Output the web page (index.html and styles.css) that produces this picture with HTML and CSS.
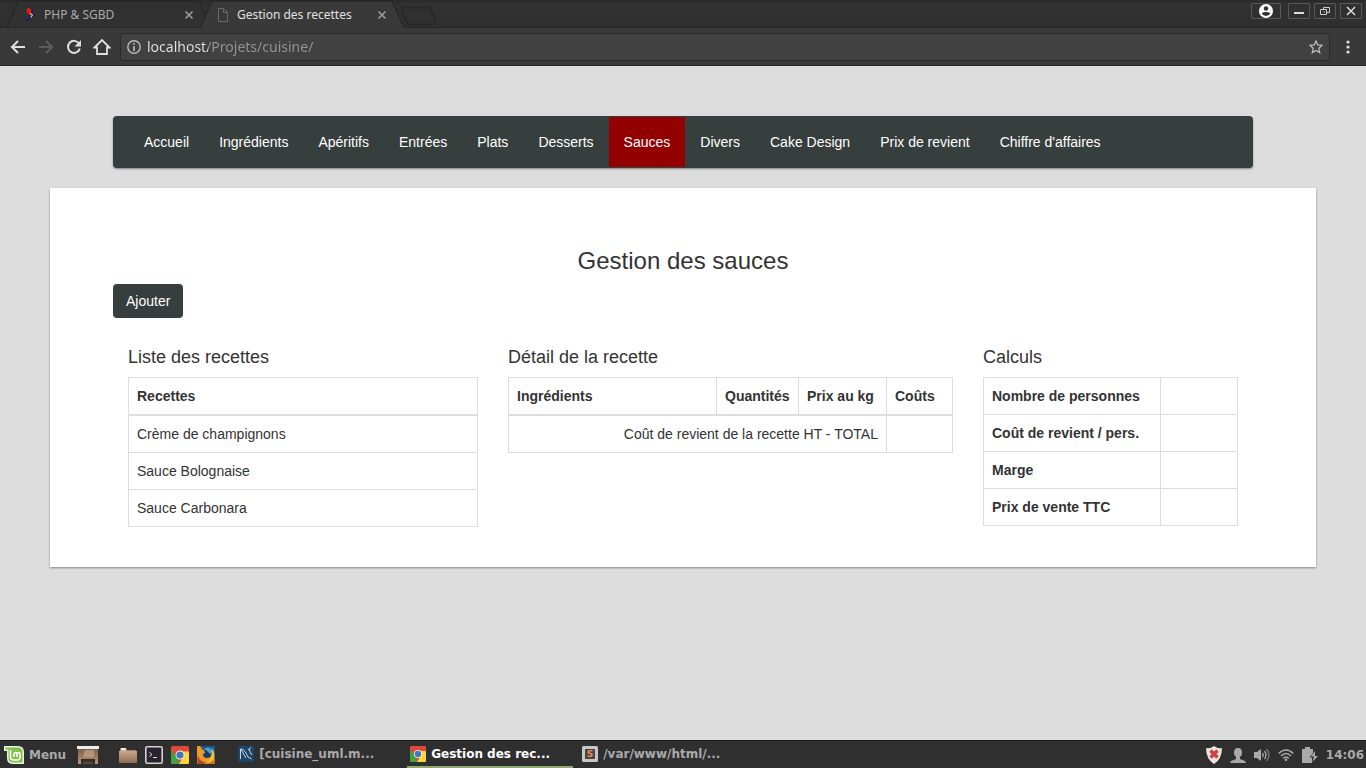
FILE: index.html
```html
<!DOCTYPE html>
<html lang="fr">
<head>
<meta charset="utf-8">
<meta name="viewport" content="width=device-width, initial-scale=1">
<title>Gestion des recettes</title>
<link rel="stylesheet" href="styles.css">
</head>
<body>

<header class="browser">
  <div class="tabstrip">
    <div class="tabs">
      <div class="tab">
        <svg class="tab-shape" viewBox="0 0 204 28" preserveAspectRatio="none"><path d="M0 28 11 1H192L204 28Z" fill="#313131" stroke="#232323"/></svg>
        <div class="tab-content">
          <svg width="12" height="14" viewBox="0 0 12 14"><path d="M5 0C2 .5 2 4 4 5.500L7.500 8 8.500 6 7.500 1.500Z" fill="#f01808"/><path d="M7.500.5 8.500 3 7 5.500M9 6.500 11 8M7 9 5 11 2 13.500" stroke="#16168c" stroke-width="1.500" fill="none"/><path d="M6 5 8.500 7 7 9.500" stroke="#e8e8e8" fill="none"/></svg>
          <span class="tab-title">PHP &amp; SGBD</span>
          <button class="tab-close" type="button" aria-label="Fermer l'onglet"><svg width="10" height="10" viewBox="0 0 10 10"><path d="M1.500 1.500 8.500 8.500M8.500 1.500 1.500 8.500" stroke="currentColor" stroke-width="1.700"/></svg></button>
        </div>
      </div>
      <div class="tab tab-active">
        <svg class="tab-shape" viewBox="0 0 204 28" preserveAspectRatio="none"><path d="M0 28 12 1H192L204 28V29H0Z" fill="#393939"/><path d="M0 28 12 1H192L204 28" fill="none" stroke="#232323"/></svg>
        <div class="tab-content">
          <svg width="12" height="14" viewBox="0 0 12 14"><path d="M1.500.5h5l4 4v9h-9zM6.500.5v4h4" fill="none" stroke="#686868"/></svg>
          <span class="tab-title">Gestion des recettes</span>
          <button class="tab-close" type="button" aria-label="Fermer l'onglet"><svg width="10" height="10" viewBox="0 0 10 10"><path d="M1.500 1.500 8.500 8.500M8.500 1.500 1.500 8.500" stroke="currentColor" stroke-width="1.700"/></svg></button>
        </div>
      </div>
      <button class="new-tab" type="button" aria-label="Nouvel onglet"><svg width="36" height="20" viewBox="0 0 36 20"><path d="M3 1.500H27Q29 1.500 30 3L34 15Q35 18.500 32 18.500H9Q7 18.500 6 17L1 4Q0 1.500 3 1.500Z" fill="#303030" stroke="#272727" stroke-width="1.500"/></svg></button>
    </div>
    <div class="window-buttons">
      <button class="win-btn profile" type="button" aria-label="Profil"><svg width="14" height="14" viewBox="0 0 14 14"><circle cx="7" cy="7" r="7" fill="#fff"/><circle cx="7" cy="4.500" r="2.200" fill="#303030"/><path d="M2.500 9.300Q7 6.600 11.500 9.300 10 12 7 12T2.500 9.300Z" fill="#303030"/></svg></button>
      <button class="win-btn" type="button" aria-label="Réduire"><svg width="12" height="12" viewBox="0 0 12 12"><path d="M1 8H11" stroke="#ddd" stroke-width="2"/></svg></button>
      <button class="win-btn" type="button" aria-label="Restaurer"><svg width="12" height="12" viewBox="0 0 12 12"><path d="M4.500 4V2.500h6v5H8M1.500 4.500h6v5h-6z" fill="none" stroke="#ccc"/><path d="M4 6.500h1.500V8" fill="none" stroke="#777"/></svg></button>
      <button class="win-btn" type="button" aria-label="Fermer"><svg width="12" height="12" viewBox="0 0 12 12"><path d="M2 2 10 10M10 2 2 10" stroke="#ddd" stroke-width="1.500"/></svg></button>
    </div>
  </div>

  <div class="toolbar">
    <button class="tool" type="button" aria-label="Précédent"><svg width="16" height="16" viewBox="0 0 16 16"><path d="M15 8H2M8 2 2 8 8 14" fill="none" stroke="#e0e0e0" stroke-width="2"/></svg></button>
    <button class="tool" type="button" aria-label="Suivant"><svg width="16" height="16" viewBox="0 0 16 16"><path d="M1 8H14M8 2 14 8 8 14" fill="none" stroke="#5e5e5e" stroke-width="2"/></svg></button>
    <button class="tool" type="button" aria-label="Actualiser"><svg width="16" height="16" viewBox="0 0 16 16"><path d="M13 4.500A6 6 0 1 0 13.800 9.500" fill="none" stroke="#e0e0e0" stroke-width="2"/><path d="M15 1V7.500H8.500Z" fill="#e0e0e0"/></svg></button>
    <button class="tool" type="button" aria-label="Accueil"><svg width="18" height="18" viewBox="0 0 18 18"><path d="M1.500 9.500 9 2 16.500 9.500H14V16H4V9.500Z" fill="none" stroke="#e0e0e0" stroke-width="1.800"/></svg></button>
    <div class="omnibox">
      <svg width="14" height="14" viewBox="0 0 14 14"><circle cx="7" cy="7" r="6.200" fill="none" stroke="#bbb" stroke-width="1.400"/><path d="M7 3V4.800M7 6V11" stroke="#bbb" stroke-width="1.600"/></svg>
      <input class="url" type="text" aria-label="Adresse" value="localhost/Projets/cuisine/">
      <button class="star" type="button" aria-label="Ajouter aux favoris"><svg width="14" height="14" viewBox="0 0 14 14"><path d="M7 1 8.700 5 13 5.400 9.800 8.300 10.700 12.600 7 10.400 3.300 12.600 4.200 8.300 1 5.400 5.300 5Z" fill="none" stroke="#bbb" stroke-width="1.300"/></svg></button>
    </div>
    <button class="tool kebab" type="button" aria-label="Menu du navigateur"><svg width="4" height="14" viewBox="0 0 4 14"><g fill="#e0e0e0"><circle cx="2" cy="2" r="1.600"/><circle cx="2" cy="7" r="1.600"/><circle cx="2" cy="12" r="1.600"/></g></svg></button>
  </div>
</header>

<main class="page">
  <nav class="navbar container">
    <ul class="nav">
      <li><a href="#">Accueil</a></li>
      <li><a href="#">Ingrédients</a></li>
      <li><a href="#">Apéritifs</a></li>
      <li><a href="#">Entrées</a></li>
      <li><a href="#">Plats</a></li>
      <li><a href="#">Desserts</a></li>
      <li><a class="active" href="#">Sauces</a></li>
      <li><a href="#">Divers</a></li>
      <li><a href="#">Cake Design</a></li>
      <li><a href="#">Prix de revient</a></li>
      <li><a href="#">Chiffre d'affaires</a></li>
    </ul>
  </nav>

  <section class="panel">
    <div class="container">
      <h1 class="title">Gestion des sauces</h1>
      <button class="btn" type="button">Ajouter</button>
      <div class="columns">
        <section>
          <h2 class="subtitle">Liste des recettes</h2>
          <table class="table">
            <thead><tr><th>Recettes</th></tr></thead>
            <tbody>
              <tr><td>Crème de champignons</td></tr>
              <tr><td>Sauce Bolognaise</td></tr>
              <tr><td>Sauce Carbonara</td></tr>
            </tbody>
          </table>
        </section>
        <section>
          <h2 class="subtitle">Détail de la recette</h2>
          <table class="table">
            <colgroup><col><col class="col-quantity"><col class="col-price"><col class="col-cost"></colgroup>
            <thead><tr><th>Ingrédients</th><th>Quantités</th><th>Prix au kg</th><th>Coûts</th></tr></thead>
            <tbody><tr><td class="total" colspan="3">Coût de revient de la recette HT - TOTAL</td><td></td></tr></tbody>
          </table>
        </section>
        <section>
          <h2 class="subtitle">Calculs</h2>
          <table class="table">
            <colgroup><col><col class="col-value"></colgroup>
            <tbody>
              <tr><th scope="row">Nombre de personnes</th><td></td></tr>
              <tr><th scope="row">Coût de revient / pers.</th><td></td></tr>
              <tr><th scope="row">Marge</th><td></td></tr>
              <tr><th scope="row">Prix de vente TTC</th><td></td></tr>
            </tbody>
          </table>
        </section>
      </div>
    </div>
  </section>
</main>

<footer class="taskbar">
  <button class="menu" type="button">
    <svg width="20" height="20" viewBox="0 0 20 20"><path d="M0 1H14Q20 1 20 7V19H9Q3 19 3 13V6H0Z" fill="#e9f4df"/><path d="M1.500 2.500H13.500Q18.500 2.500 18.500 7.500V17.500H9Q4.500 17.500 4.500 13V4.500H1.500Z" fill="#83c04c"/><path d="M6.500 5V12Q6.500 15 9.500 15H13.500Q16 15 16 12.500V9Q16 7.500 14.500 7.500T13 9V12M13 9Q13 7.500 11.500 7.500T10 9V12" fill="none" stroke="#fff" stroke-width="1.500"/></svg>
    <span>Menu</span>
  </button>
  <div class="launchers">
    <button class="launcher desktop" type="button" aria-label="Bureau"><svg width="22" height="20" viewBox="0 0 22 20"><defs><linearGradient id="wood" x2="0" y2="1"><stop stop-color="#80604c"/><stop offset="1" stop-color="#bd9478"/></linearGradient></defs><path d="M1 4H21V19H1Z" fill="url(#wood)"/><path d="M8 5H17V12H6Z" fill="#c8ab94" opacity=".6"/><path d="M0 1H22V4H0Z" fill="#eee"/><path d="M4 14H18V19H4Z" fill="#342b25"/><path d="M6 16.500H16V19H6Z" fill="#55463b"/></svg></button>
    <button class="launcher" type="button" aria-label="Fichiers"><svg width="18" height="18" viewBox="0 0 18 18"><defs><linearGradient id="folder" x2="0" y2="1"><stop stop-color="#c8a78d"/><stop offset="1" stop-color="#906b51"/></linearGradient></defs><path d="M1 2H7L8 4H17V8H1Z" fill="#9b806d"/><path d="M2 2H6.500L7.500 4.500H2Z" fill="#eee"/><path d="M0 5H18V17H0Z" fill="url(#folder)"/></svg></button>
    <button class="launcher" type="button" aria-label="Terminal"><svg width="18" height="18" viewBox="0 0 18 18"><rect x=".8" y=".8" width="16.400" height="16.400" rx="1.500" fill="#29242f" stroke="#d2d2d2" stroke-width="1.600"/><path d="M4.500 6.500 7 8.500 4.500 10.500M8 11.500H12" fill="none" stroke="#ddd"/></svg></button>
    <button class="launcher" type="button" aria-label="Chrome"><svg width="18" height="18" viewBox="0 0 18 18"><rect width="18" height="18" rx="1.500" fill="#e0483c"/><path d="M0 4 6 11 9 18H1.500Q0 18 0 16.500Z" fill="#43a047"/><path d="M9 5.500H18V16.500Q18 18 16.500 18H8L12 11Z" fill="#fdd73a"/><circle cx="9" cy="9" r="4.500" fill="#f4f4f4"/><circle cx="9" cy="9" r="3.600" fill="#3f78bd"/></svg></button>
    <button class="launcher" type="button" aria-label="Firefox"><svg width="18" height="18" viewBox="0 0 18 18"><rect width="18" height="18" rx="1.500" fill="#d9701f"/><path d="M3 0H18V13L12 9Z" fill="#1d5c92"/><circle cx="9.500" cy="7.500" r="6.500" fill="#173b6c"/><path d="M6 3Q12-1 16 5L13 8 11 6 9 4Z" fill="#49a1cf"/><path d="M0 0H3L4 3 7 4 8 7 6 8Q6 12 10 12 14 12 15 8 17 13 12 16 6 19 2 14-1 9 0 0Z" fill="#ed9a2a"/><path d="M15 2Q19 8 16.500 14 13 18 9 17 15 14 15 2Z" fill="#f3bf2b"/><path d="M1 10Q3 16 9 16L6 18H1Z" fill="#b3452a"/></svg></button>
  </div>
  <div class="tasks">
    <button class="task" type="button"><svg width="16" height="16" viewBox="0 0 16 16"><rect width="16" height="16" rx="1" fill="#1e4468"/><path d="M2.500 13V3Q5 2 8 7L10 11 13.500 13M3 3 5 7 8 12M10 4 13 1.500M11 3 12.500 7 14 9" fill="none" stroke="#c5d7e2"/></svg><span>[cuisine_uml.m...</span></button>
    <button class="task task-active" type="button"><svg width="16" height="16" viewBox="0 0 18 18"><rect width="18" height="18" rx="1.500" fill="#e0483c"/><path d="M0 4 6 11 9 18H1.500Q0 18 0 16.500Z" fill="#43a047"/><path d="M9 5.500H18V16.500Q18 18 16.500 18H8L12 11Z" fill="#fdd73a"/><circle cx="9" cy="9" r="4.500" fill="#f4f4f4"/><circle cx="9" cy="9" r="3.600" fill="#3f78bd"/></svg><span>Gestion des rec...</span></button>
    <button class="task" type="button"><svg width="16" height="16" viewBox="0 0 16 16"><rect width="16" height="16" rx="1.500" fill="#c7c7c7"/><rect x="3" y="3" width="10" height="10" fill="#464646"/><text class="sublime" x="8" y="11" text-anchor="middle">S</text></svg><span>/var/www/html/...</span></button>
  </div>
  <div class="tray">
    <svg width="16" height="18" viewBox="0 0 16 18"><path d="M8 0Q12 3 16 2 16 13 8 18 0 13 0 2 4 3 8 0Z" fill="#e8e5e0"/><path d="M4.500 4.500 11.500 11.500M11.500 4.500 4.500 11.500" stroke="#d04045" stroke-width="3.500"/></svg>
    <svg width="16" height="16" viewBox="0 0 16 16"><path d="M8 1C5 1 4 3 4 6 4 8 5 9 6 10V12L1 14 0 16H16L15 14 10 12V10C11 9 12 8 12 6 12 3 11 1 8 1Z" fill="#aaa"/></svg>
    <svg width="16" height="16" viewBox="0 0 16 16"><path d="M0 5H3L7 2V14L3 11H0Z" fill="#aaa"/><path d="M8.500 6Q10 8 8.500 10M10.500 4Q13.500 8 10.500 12" fill="none" stroke="#aaa" stroke-width="1.300"/><path d="M12.500 2Q17.500 8 12.500 14" fill="none" stroke="#777" stroke-width="1.300"/></svg>
    <svg width="16" height="16" viewBox="0 0 16 16"><path d="M.7 6.500Q8-.5 15.300 6.500M3 9Q8 4 13 9M5.300 11.300Q8 8.700 10.700 11.300" fill="none" stroke="#aaa" stroke-width="1.600"/><circle cx="8" cy="12.800" r="1.300" fill="#aaa"/></svg>
    <svg width="16" height="18" viewBox="0 0 16 18"><path d="M3 3V1H8V3H11V7L7.500 11.500H10V17H0V3Z" fill="#aaa"/><path d="M13 5 9 10.500H12L10.500 16 16 10H13Z" fill="#aaa"/></svg>
    <time class="clock">14:06</time>
  </div>
</footer>

</body>
</html>
```
FILE: styles.css
```css
*,
*::before,
*::after {
  box-sizing: border-box;
}

body {
  margin: 0;
  min-height: 100vh;
  display: flex;
  flex-direction: column;
  background: #ddd;
  color: #333;
  font: 14px/20px "Liberation Sans", Arial, sans-serif;
}

button {
  margin: 0;
  padding: 0;
  border: 0;
  background: none;
  color: inherit;
  font: inherit;
  cursor: pointer;
}

svg {
  display: block;
  flex: none;
}

/* Browser window */

.browser {
  border-bottom: 1px solid #242424;
  background: #393939;
  font-family: "Noto Sans", sans-serif;
}

.tabstrip {
  display: flex;
  justify-content: space-between;
  height: 28px;
  padding: 0 4px 0 7px;
  background: linear-gradient(#292929, #313131 4px, #2f2f2f);
  box-shadow: inset 0 -1px #262626;
}

.tabs {
  display: flex;
}

.tab {
  display: grid;
  width: 204px;
  color: #aaa;
  font-size: 12px;
}

.tab + .tab {
  margin-left: -11px;
}

.tab-active {
  z-index: 1;
  color: #e0e0e0;
}

.tab-shape {
  grid-area: 1 / 1;
  width: 100%;
  height: 28px;
}

.tab-content {
  grid-area: 1 / 1;
  z-index: 1;
  display: flex;
  align-items: center;
  gap: 8px;
  padding: 4px 17px 2px;
}

.tab-title {
  flex: 1;
  white-space: nowrap;
}

.tab-close {
  color: #999;
}

.new-tab {
  z-index: 2;
  align-self: center;
  padding-top: 4px;
  margin-left: -3px;
}

.window-buttons {
  display: flex;
  gap: 4px;
  padding-top: 3px;
}

.win-btn {
  display: grid;
  place-items: center;
  width: 22px;
  height: 16px;
  border: 1px solid #585858;
  border-radius: 1px;
}

.profile {
  width: 30px;
  margin-right: 3px;
}

.toolbar {
  display: flex;
  align-items: center;
  gap: 4px;
  height: 37px;
  padding: 0 6px;
}

.tool {
  display: grid;
  place-items: center;
  width: 24px;
  height: 24px;
}

.kebab {
  margin-left: 2px;
}

.omnibox {
  flex: 1;
  display: flex;
  align-items: center;
  gap: 6px;
  height: 28px;
  margin-left: 2px;
  padding: 0 6px;
  border: 1px solid #2a2a2a;
  border-radius: 3px;
  background: #414141;
}

.url {
  flex: 1;
  min-width: 0;
  height: 24px;
  padding: 0;
  border: 0;
  outline: 0;
  background: linear-gradient(90deg, #e4e4e4 61px, #949494 61px);
  background-clip: text;
  color: transparent;
  font: 14px/24px "Noto Sans", sans-serif;
}

/* Page */

.page {
  flex: 1;
  padding: 50px;
}

.container {
  max-width: 1140px;
  margin: 0 auto;
}

.navbar {
  margin-bottom: 20px;
  padding: 1px 16px;
  border-radius: 4px;
  background: #373e3e;
  box-shadow: 0 1px 2px rgba(0, 0, 0, .4);
}

.nav {
  display: flex;
  flex-wrap: wrap;
  margin: 0;
  padding: 0;
  list-style: none;
}

.nav a {
  display: block;
  padding: 15px;
  color: #fff;
  text-decoration: none;
}

.nav .active {
  background: #930000;
}

.panel {
  padding: 60px 20px 40px;
  background: #fff;
  box-shadow: 0 1px 2px rgba(0, 0, 0, .4);
}

.title {
  margin: 0 0 10px;
  font-size: 24px;
  font-weight: 400;
  line-height: 26px;
  text-align: center;
}

.btn {
  display: block;
  padding: 7px 13px;
  border-radius: 4px;
  background: #373e3e;
  color: #fff;
}

.columns {
  display: grid;
  grid-template-columns: 350fr 445fr 255fr;
  gap: 30px;
  margin-top: 29px;
  padding: 0 15px;
}

.subtitle {
  margin: 0 0 10px;
  font-size: 18px;
  font-weight: 400;
  line-height: 20px;
}

.table {
  width: 100%;
  border-collapse: collapse;
  table-layout: fixed;
}

.table th,
.table td {
  height: 37px;
  padding: 8px;
  border: 1px solid #ddd;
  text-align: left;
}

.table thead th {
  border-bottom-width: 2px;
}

.table .total {
  text-align: right;
}

.col-quantity {
  width: 82px;
}

.col-price {
  width: 88px;
}

.col-cost {
  width: 66px;
}

.col-value {
  width: 77px;
}

/* Desktop taskbar */

.taskbar {
  display: flex;
  align-items: stretch;
  height: 28px;
  padding: 0 2px 0 4px;
  border-top: 1px solid #1c1c1c;
  background: #2f2f2f;
  color: #aaa;
  font: bold 12px/16px "DejaVu Sans", sans-serif;
}

.menu {
  display: flex;
  align-items: center;
  gap: 5px;
}

.launchers {
  display: flex;
  align-items: center;
  gap: 8px;
  margin-left: 11px;
}

.desktop {
  margin-right: 12px;
}

.tasks {
  flex: 1;
  display: flex;
  gap: 6px;
  margin-left: 20px;
}

.task {
  display: flex;
  align-items: center;
  gap: 5px;
  width: 166px;
  padding: 0 3px;
  border-bottom: 2px solid transparent;
  white-space: nowrap;
}

.task-active {
  border-bottom-color: #8fa876;
  color: #fff;
}

.sublime {
  fill: #f08a4b;
  font: bold 9px "DejaVu Sans", sans-serif;
}

.tray {
  display: flex;
  align-items: center;
  gap: 8px;
}
```
